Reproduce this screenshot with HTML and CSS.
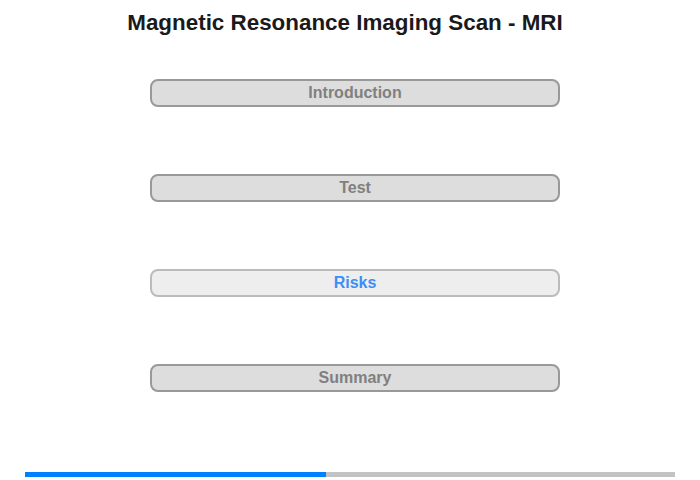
FILE: index.html
```html
<!DOCTYPE html>
<html>
<head>
<meta charset="utf-8">
<link rel="stylesheet" href="styles.css">
</head>
<body>
<div class="page">
  <h1 class="title">Magnetic Resonance Imaging Scan - MRI</h1>
  <div class="menu">
    <div class="btn">Introduction</div>
    <div class="btn">Test</div>
    <div class="btn active">Risks</div>
    <div class="btn">Summary</div>
  </div>
  <div class="progress"><div class="fill" style="width:46.3%"></div></div>
</div>
</body>
</html>
```
FILE: styles.css
```css
html, body {
  margin: 0;
  padding: 0;
  background: #fff;
}
.page {
  width: 700px;
  height: 480px;
  font-family: "Liberation Sans", Arial, sans-serif;
  display: flex;
  flex-direction: column;
}
.title {
  margin: 10px 0 0 0;
  padding-right: 10px;
  font-size: 22.4px;
  line-height: 26px;
  font-weight: bold;
  color: #1a1a1a;
  text-align: center;
}
.menu {
  margin: 43px 0 0 150px;
  width: 410px;
  display: flex;
  flex-direction: column;
  gap: 67px;
}
.btn {
  box-sizing: border-box;
  height: 28px;
  border: 2px solid #999;
  border-radius: 8px;
  background: #ddd;
  color: #808080;
  font-size: 16px;
  font-weight: bold;
  line-height: 24px;
  text-align: center;
}
.btn.active {
  background: #eee;
  border-color: #bbb;
  color: #3b8ff5;
}
.progress {
  margin: 80px 0 0 25px;
  width: 650px;
  height: 5px;
  background: #c3c3c3;
}
.fill {
  height: 100%;
  background: #0080ff;
}
```
